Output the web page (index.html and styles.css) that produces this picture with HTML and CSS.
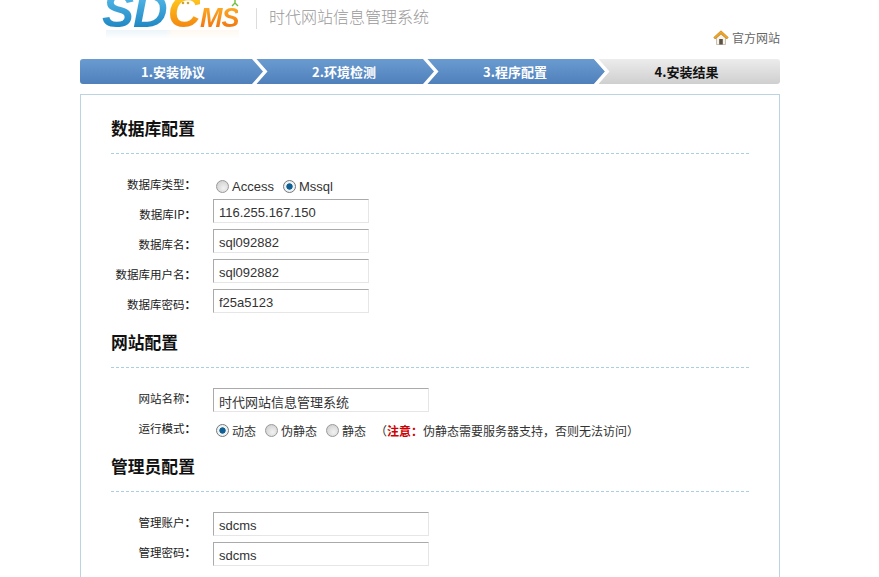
FILE: index.html
```html
<!DOCTYPE html>
<html lang="zh">
<head>
<meta charset="utf-8">
<title>SDCMS 安装</title>
<link rel="stylesheet" href="styles.css">
</head>
<body>
<div class="wrap">
  <header class="head">
    <div class="brand">
      <div class="logo"><span class="sd">SD</span><span class="c">C</span><span class="ms">MS</span>
        <svg class="sprout" width="8" height="8" viewBox="0 0 8 8"><path d="M4 0v5M1 7l3-3 3 3" fill="none" stroke="#6fbf3a" stroke-width="1.400"/></svg>
        <svg class="dots" width="10" height="4" viewBox="0 0 10 4"><circle cx="2" cy="2" r="1.300" fill="#c9a63a"/><circle cx="7" cy="2" r="1.300" fill="#c9a63a"/></svg>
      </div>
      <div class="divider"></div>
      <div class="slogan">时代网站信息管理系统</div>
    </div>
    <a class="home">
      <svg width="16" height="16" viewBox="0 0 16 16"><path d="M3.500 8 8 4.200 12.500 8v6.500h-9z" fill="#f6f3ea" stroke="#b0aa96" stroke-width=".7"/><rect x="6.200" y="9" width="3.600" height="5.500" fill="#5c5346"/><path d="M8 .8.800 7.400l1.300 1.500L8 3.700l5.900 5.200 1.300-1.500z" fill="#f2a71f" stroke="#c77c12" stroke-width=".7" stroke-linejoin="round"/></svg>
      <span>官方网站</span>
    </a>
  </header>
  <nav class="steps">
    <div class="step">1.安装协议<svg class="chev" width="18" height="25" viewBox="0 0 18 25"><defs><linearGradient id="blue" x1="0" y1="0" x2="0" y2="1"><stop offset="0" stop-color="#6a9bd0"/><stop offset="1" stop-color="#4f80bb"/></linearGradient></defs><path class="chev-fill" d="M0 0h1l11 12.500L1 25H0z"/><path class="chev-line" d="M1 0h4.500L16.500 12.500 5.500 25H1l11-12.500z"/></svg></div>
    <div class="step">2.环境检测<svg class="chev" width="18" height="25" viewBox="0 0 18 25"><path class="chev-fill" d="M0 0h1l11 12.500L1 25H0z"/><path class="chev-line" d="M1 0h4.500L16.500 12.500 5.500 25H1l11-12.500z"/></svg></div>
    <div class="step">3.程序配置<svg class="chev" width="18" height="25" viewBox="0 0 18 25"><path class="chev-fill" d="M0 0h1l11 12.500L1 25H0z"/><path class="chev-line" d="M1 0h4.500L16.500 12.500 5.500 25H1l11-12.500z"/></svg></div>
    <div class="step last">4.安装结果</div>
  </nav>
  <main class="box">
    <h2 class="title first">数据库配置</h2>
    <div class="fields db">
      <div class="row"><label class="lab">数据库类型<span class="colon">：</span></label><div class="opts"><span class="radio"></span><span class="lat">Access</span><span class="radio on"></span><span class="lat">Mssql</span></div></div>
      <div class="row"><label class="lab">数据库IP<span class="colon">：</span></label><input class="ipt" value="116.255.167.150"></div>
      <div class="row"><label class="lab">数据库名<span class="colon">：</span></label><input class="ipt" value="sql092882"></div>
      <div class="row"><label class="lab">数据库用户名<span class="colon">：</span></label><input class="ipt" value="sql092882"></div>
      <div class="row"><label class="lab">数据库密码<span class="colon">：</span></label><input class="ipt" value="f25a5123"></div>
    </div>
    <h2 class="title">网站配置</h2>
    <div class="fields">
      <div class="row"><label class="lab">网站名称<span class="colon">：</span></label><input class="ipt wide" value="时代网站信息管理系统"></div>
      <div class="row"><label class="lab">运行模式<span class="colon">：</span></label><div class="opts"><span class="radio on"></span><span class="opt">动态</span><span class="radio"></span><span class="opt">伪静态</span><span class="radio"></span><span class="opt">静态</span><span class="note">（<b>注意：</b>伪静态需要服务器支持，否则无法访问）</span></div></div>
    </div>
    <h2 class="title third">管理员配置</h2>
    <div class="fields">
      <div class="row"><label class="lab">管理账户<span class="colon">：</span></label><input class="ipt wide" value="sdcms"></div>
      <div class="row"><label class="lab">管理密码<span class="colon">：</span></label><input class="ipt wide" value="sdcms"></div>
    </div>
  </main>
</div>
</body>
</html>
```
FILE: styles.css
```css
* { box-sizing: border-box; }
html, body { margin: 0; height: 577px; overflow: hidden; background: #fff; }
body { font: 12px/1.2 "Noto Sans CJK SC", "DejaVu Sans", sans-serif; color: #222; }
.wrap { width: 700px; margin-left: 80px; }
.head { height: 59px; display: flex; justify-content: space-between; }
.brand { display: flex; align-items: flex-start; height: 42px; margin-left: 22px; }
.logo { position: relative; margin-top: -12px; width: 141px; height: 54px; font: italic bold 46px/46px "Liberation Sans", sans-serif; white-space: nowrap; letter-spacing: -1px; }
.logo::after { content: ""; position: absolute; left: 4px; right: 4px; top: 42px; height: 9px; background: linear-gradient(90deg, #cfe6f3 0 45%, #fdeeda 50% 100%); opacity: .4; -webkit-mask-image: linear-gradient(#000, transparent); mask-image: linear-gradient(#000, transparent); }
.logo span { -webkit-background-clip: text; background-clip: text; color: transparent; }
.logo .sd { font-size: 48px; background-image: linear-gradient(#55b8e8 20%, #0f79b8); }
.logo .c { font-size: 46px; margin-left: 1px; background-image: linear-gradient(#ffc81f 25%, #f0720a); }
.logo .ms { font-size: 27px; background-image: linear-gradient(#ffb52a, #ee6a0a); }
.sprout { position: absolute; left: 129px; top: 11px; }
.dots { position: absolute; left: 79px; top: 13px; }
.divider { width: 1px; height: 21px; margin: 8px 0 0 13px; background: #dcdcdc; }
.slogan { margin: 6px 0 0 12px; font-size: 16px; line-height: 20px; color: #999; font-weight: 300; }
.home { display: flex; align-items: center; gap: 3px; margin-top: 29px; height: 18px; color: #666; }
.steps { display: grid; grid-template-columns: 171px 171px 171px 1fr; height: 25px; }
.step { position: relative; display: flex; align-items: center; justify-content: center; padding: 1px 0 0 15px; font-size: 13px; font-weight: 700; color: #fff; background: linear-gradient(#6a9bd0, #4f80bb); }
.step:first-child { border-radius: 3px 0 0 3px; }
.step.last { padding-left: 0; color: #111; background: linear-gradient(#ececec, #cfcfcf); border-radius: 0 3px 3px 0; }
.chev { position: absolute; right: -18px; top: 0; z-index: 1; }
.chev-fill { fill: url(#blue); }
.chev-line { fill: #fff; }
.box { margin-top: 10px; height: 520px; border: 1px solid #bcd3e2; padding: 0 30px; }
.title { margin: 0; height: 55px; padding-top: 17px; font-size: 16.800px; line-height: 24px; font-weight: 700; color: #111; border-bottom: 1px dashed #a9cfe3; }
.title.first { height: 59px; padding-top: 21px; }
.title.third { height: 50px; padding-top: 12px; }
.fields { padding-top: 20px; display: flex; flex-direction: column; gap: 6px; }
.fields.db { padding-top: 15px; }
.row { display: flex; align-items: center; height: 24px; }
.lab { width: 85px; margin-right: 17px; padding-bottom: 2px; text-align: right; font-size: 11.500px; color: #222; white-space: nowrap; }
.db .lab { padding: 8px 0 0; }
.colon { font-family: "Noto Sans CJK TC", sans-serif; font-weight: 700; }
.opts { display: flex; align-items: center; margin-left: 3px; padding-top: 2px; color: #333; white-space: nowrap; }
.db .opts { padding-top: 11px; }
.lat { font: 13px "Liberation Sans", sans-serif; margin-right: 9px; }
.radio { width: 13px; height: 13px; border-radius: 50%; margin-right: 3px; border: 1px solid #999; background: radial-gradient(circle at 60% 65%, #f2f2f2, #c9c9c9); }
.radio.on { background: radial-gradient(circle, #0f5f93 0 2.800px, #eef3f6 3.500px); border-color: #777; }
.opt { margin-right: 9px; }
.note b { color: #c00; font-weight: 700; }
.ipt { width: 156px; height: 24px; padding: 2px 5px 0; border: 1px solid #e6e6e6; border-top-color: #aaa; border-left-color: #aaa; font: 13px "Liberation Sans", "Noto Sans CJK SC", sans-serif; color: #333; background: #fff; outline: 0; border-radius: 0; }
.ipt.wide { width: 216px; }
```
